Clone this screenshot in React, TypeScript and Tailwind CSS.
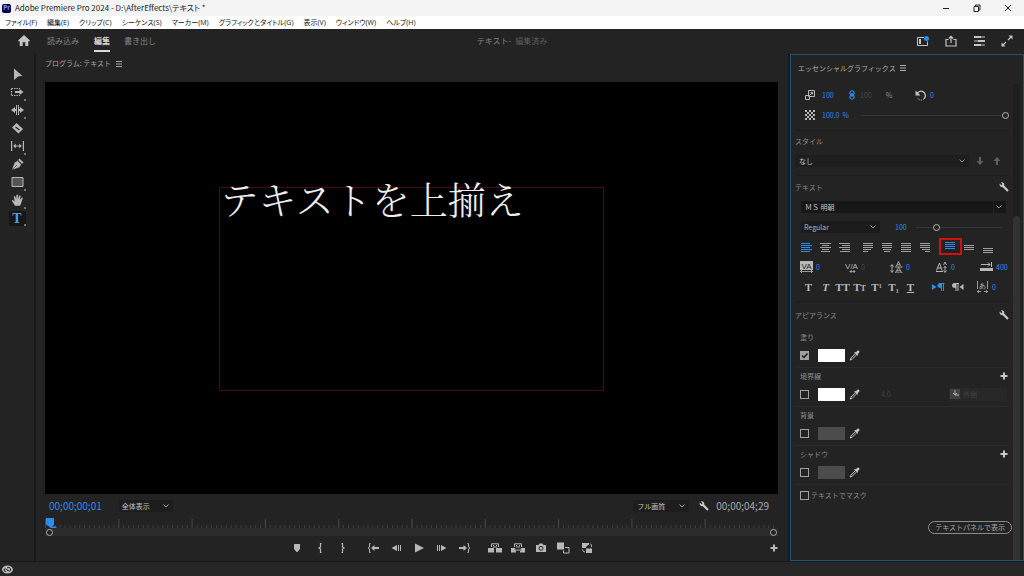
import type { ReactNode } from 'react'

type IconProps = { w?: number; h?: number; className?: string; children: ReactNode }

function Icon({ w = 12, h = 12, className = '', children }: IconProps) {
    return (
        <svg
            width={w}
            height={h}
            viewBox={`0 0 ${w} ${h}`}
            fill="currentColor"
            className={`shrink-0 ${className}`}
            aria-hidden="true"
        >
            {children}
        </svg>
    )
}

const stroke = { fill: 'none', stroke: 'currentColor' }

/* ---------- shared icons ---------- */

const MenuLines = () => (
    <Icon w={6} h={6}>
        <path d="M0 .5h6M0 3h6M0 5.5h6" {...stroke} />
    </Icon>
)

const Chevron = () => (
    <Icon w={6} h={4} className="pointer-events-none absolute top-1/2 right-1 -translate-y-1/2">
        <path d="M.5 .5L3 3L5.500 .5" {...stroke} />
    </Icon>
)

const Wrench = () => (
    <Icon w={10} h={10}>
        <path d="M.6 1.600L2.400 3.300L3.500 2.200L1.900 .5C3.500 -.1 5.300 .9 5.300 2.700L5.200 3.600L9.700 8.200L8.300 9.700L3.700 5.200C2 5.700 .1 4 .6 1.600Z" />
    </Icon>
)

const Plus = () => (
    <Icon w={8} h={8}>
        <path d="M3 .5h2V3h2.500v2H5v2.500H3V5H.5V3H3z" />
    </Icon>
)

const Eyedropper = () => (
    <Icon w={11} h={11}>
        <path d="M6 1.800L7 2.600L8 1Q9.200 .1 10.200 1Q10.900 2 10 3L8.500 4L9.200 5L8.200 5.800L5.200 2.800z" />
        <path d="M6 4L1.800 8.200L1.200 10L3 9.400L7.200 5.200" {...stroke} />
    </Icon>
)

/* ---------- top bars ---------- */

const menus = [
    'ファイル(F)',
    '編集(E)',
    'クリップ(C)',
    'シーケンス(S)',
    'マーカー(M)',
    'グラフィックとタイトル(G)',
    '表示(V)',
    'ウィンドウ(W)',
    'ヘルプ(H)',
]

function TitleBar() {
    return (
        <header className="flex h-4 items-center bg-[#f3f3f3] pl-[2px] text-[#222]">
            <span className="flex h-[9px] w-[9px] items-center justify-center rounded-xs bg-[#00005b] text-[6px] leading-none font-bold text-[#9999ff]">
                Pr
            </span>
            <h1 className="ml-1 text-[8px] leading-4 [font-feature-settings:'palt']">
                Adobe Premiere Pro 2024 - D:\AfterEffects\テキスト *
            </h1>
            <div className="ml-auto flex">
                <button aria-label="最小化" className="flex w-[31px] justify-center">
                    <Icon w={8} h={8}>
                        <path d="M1 4.500h6" {...stroke} />
                    </Icon>
                </button>
                <button aria-label="元に戻す" className="flex w-[31px] justify-center">
                    <Icon w={8} h={8}>
                        <path d="M1 2.500h4.500v5H1zM2.500 2.500V1h4.500v5H5.500" {...stroke} />
                    </Icon>
                </button>
                <button aria-label="閉じる" className="flex w-[32px] justify-center">
                    <Icon w={8} h={8}>
                        <path d="M1 1l6 6M7 1L1 7" {...stroke} />
                    </Icon>
                </button>
            </div>
        </header>
    )
}

function MenuBar() {
    return (
        <nav className="flex h-[13px] items-center gap-[10px] bg-white pl-[5px] font-['Open_Sans','Noto_Sans_CJK_JP',sans-serif] text-[7px] leading-3 text-[#111] [font-feature-settings:'palt']">
            {menus.map((m) => (
                <button key={m} className="whitespace-nowrap">
                    {m}
                </button>
            ))}
        </nav>
    )
}

function WorkspaceBar() {
    return (
        <div className="relative flex h-[25px] items-stretch bg-[#232323] pb-[2px] pl-[18px] text-[8px] text-[#858585]">
            <button aria-label="ホーム" className="mr-[17px] flex items-center text-[#c4c4c4]">
                <Icon w={12} h={11}>
                    <path d="M6 0L12 5.500L11 6.500L10.300 6V11H7.300V7.300H4.700V11H1.700V6L1 6.500L0 5.500z" />
                </Icon>
            </button>
            <button className="mr-[15px]">読み込み</button>
            <button className="mr-[14px] border-b-2 border-[#d8d8d8] pt-[2px] font-bold text-[#d8d8d8]">編集</button>
            <button>書き出し</button>
            <p className="pointer-events-none absolute inset-x-0 top-0 bottom-[2px] flex items-center justify-center text-[#858585]">
                テキスト-<span className="ml-1 text-[#5c5c5c]">編集済み</span>
            </p>
            <div className="relative ml-auto flex items-center pr-[3px] text-[#c4c4c4]">
                <button aria-label="ワークスペース" className="flex w-7 justify-center">
                    <Icon w={12} h={10}>
                        <path d="M7 1.500H.5v8h10V5.500" {...stroke} />
                        <path d="M2 3h2v5H2z" />
                        <circle cx="9.500" cy="2.500" r="2.500" fill="#2d8ceb" />
                    </Icon>
                </button>
                <button aria-label="クイック書き出し" className="flex w-7 justify-center">
                    <Icon w={12} h={12}>
                        <path d="M3.500 4.500H1v6.500h10V4.500H8.500M6 8V1.500M3.800 3.500L6 1.300L8.200 3.500" {...stroke} strokeWidth="1.200" />
                    </Icon>
                </button>
                <button aria-label="設定" className="flex w-7 justify-center">
                    <Icon w={11} h={10}>
                        <path d="M0 0h11v2H0zM0 4h11v2H0zM0 8h11v2H0z" opacity=".5" />
                        <path d="M0 0h7v2H0zM4 4h7v2H4zM0 8h7v2H0z" />
                    </Icon>
                </button>
                <button aria-label="フルスクリーン" className="flex w-7 justify-center">
                    <Icon w={12} h={12}>
                        <path d="M7 5L10.500 1.500M5 7L1.500 10.500" {...stroke} strokeWidth="1.200" />
                        <path d="M7.500 .5h4v4zM.5 7.500v4h4z" />
                    </Icon>
                </button>
            </div>
        </div>
    )
}

/* ---------- tool palette ---------- */

type Tool = { name: string; more?: boolean; icon: ReactNode }

const tools: Tool[] = [
    { name: '選択', icon: <path d="M3 .5L11.500 8L7.500 8.300L3 12z" /> },
    {
        name: 'トラックの前方選択',
        more: true,
        icon: (
            <>
                <path d="M.5 2.500H9M.5 9.500H9M.5 2.500v7" {...stroke} strokeDasharray="1.500 1" />
                <path d="M4 5h4.500V3l4 3l-4 3V7H4z" />
            </>
        ),
    },
    {
        name: 'リップル',
        more: true,
        icon: <path d="M5 1h1v10H5zM7 1h1v10H7zM0 6l4-3v2h1v2H4v2zM13 6L9 3v2H8v2h1v2z" />,
    },
    {
        name: 'レーザー',
        icon: (
            <>
                <path d="M5.500 1L12 7L7.500 11.500L1 5.500z" />
                <path d="M4.500 5L8.500 8" stroke="#232323" strokeWidth="1.200" />
            </>
        ),
    },
    {
        name: 'スリップ',
        more: true,
        icon: <path d="M0 1h1.200v10H0zM11.800 1H13v10h-1.200zM2.200 6l2.500-2.500v2h3.600v-2L10.800 6L8.300 8.500v-2H4.700v2z" />,
    },
    {
        name: 'ペン',
        icon: (
            <>
                <path d="M8.500 .5L12.500 4.500L11 5.800L7.200 2z" />
                <path d="M6.500 2.600L10.400 6.500L8.500 9.500L1.800 11.800L1 11L3.500 4.500zM2 11L6 7" stroke="#232323" strokeWidth=".5" />
            </>
        ),
    },
    {
        name: '長方形',
        more: true,
        icon: <path d="M1 1.500h11v9H1z" fill="#555" stroke="currentColor" />,
    },
    {
        name: '手のひら',
        more: true,
        icon: (
            <path d="M4 11.800L1 7Q.6 5.800 2 6.200L3.700 7.600L2.800 2.700Q3.600 1.500 4.300 2.700L5.200 5.500L5.400 1Q6.300 0 6.900 1L7 5.400L8.100 1.500Q9.200 .7 9.500 1.900L8.900 6L10.700 3.500Q12 3.300 11.700 4.500L9.800 10L9.200 11.800z" />
        ),
    },
]

function ToolBar() {
    return (
        <aside className="flex w-[34px] shrink-0 flex-col items-center bg-[#232323] pt-[11px] text-[#b8b8b8]">
            {tools.map((t) => (
                <button key={t.name} aria-label={t.name} className="relative flex h-[18px] w-[18px] items-center justify-center">
                    <Icon w={13} h={12}>
                        {t.icon}
                    </Icon>
                    {t.more && <span className="absolute right-0 bottom-0 h-[2px] w-[2px] bg-[#777]" />}
                </button>
            ))}
            <button
                aria-label="文字"
                className="relative mt-[2px] flex h-[15px] w-[17px] items-center justify-center bg-[#161616] font-['Liberation_Serif',serif] text-[14px] leading-none font-bold text-[#4a9fe8]"
            >
                T
                <span className="absolute right-0 bottom-0 h-[2px] w-[2px] bg-[#777]" />
            </button>
        </aside>
    )
}

/* ---------- program monitor ---------- */

const ticks = Array.from({ length: 150 }, (_, i) => i)

function Ruler() {
    return (
        <div className="relative h-[18px]">
            <svg className="h-[10px] w-full" aria-hidden="true">
                {ticks.map((i) => (
                    <rect
                        key={i}
                        x={`${i / 1.5}%`}
                        y={i % 15 ? 7 : 1}
                        width="1"
                        height={i % 15 ? 3 : 9}
                        fill={i % 15 ? '#404040' : '#4a4a4a'}
                    />
                ))}
            </svg>
            <div className="absolute inset-x-0 bottom-0 flex h-2 items-center justify-between bg-[#2c2c2c] px-px">
                <span className="h-[7px] w-[7px] rounded-full border border-[#b0b0b0] bg-[#232323]" />
                <span className="h-[7px] w-[7px] rounded-full border border-[#b0b0b0] bg-[#232323]" />
            </div>
            <Icon w={12} h={10} className="absolute top-0 left-px text-[#2d8ceb]">
                <path d="M0 0h8v7L6 8.500h4.500V10H5L0 6.500z" />
            </Icon>
        </div>
    )
}

type Transport = { name: string; w?: number; icon: ReactNode }

const marks: Transport[] = [
    { name: 'マーカーを追加', icon: <path d="M3 2h6v5L6.500 10h-1L3 7z" /> },
    { name: 'インをマーク', icon: <path d="M7.500 1.500H6.500V5L5 6l1.500 1v3.500h1" {...stroke} strokeWidth="1.200" /> },
    { name: 'アウトをマーク', icon: <path d="M4.500 1.500h1V5L7 6L5.500 7v3.500h-1" {...stroke} strokeWidth="1.200" /> },
]

const playback: Transport[] = [
    {
        name: 'インへ移動',
        icon: (
            <>
                <path d="M3.500 1.500h-1V5L1 6l1.500 1v3.500h1" {...stroke} />
                <path d="M4 6l3.500-3v2H12v2H7.500v2z" />
            </>
        ),
    },
    { name: '前のフレーム', icon: <path d="M1.500 6L7 3v6zM8 3h1v6H8zM10 3h1v6h-1z" /> },
    { name: '再生', icon: <path d="M2 1.500L11 6L2 10.500z" /> },
    { name: '次のフレーム', icon: <path d="M10.500 6L5 3v6zM1 3h1v6H1zM3 3h1v6H3z" /> },
    {
        name: 'アウトへ移動',
        icon: (
            <>
                <path d="M8.500 1.500h1V5L11 6L9.500 7v3.500h-1" {...stroke} />
                <path d="M8 6L4.500 3v2H0v2h4.500v2z" />
            </>
        ),
    },
]

const edits: Transport[] = [
    {
        name: 'リフト',
        w: 14,
        icon: (
            <>
                <path d="M0 6h6v4.500H0zM8 6h6v4.500H8z" />
                <path d="M3.500 5V1.800h7V5M5 5h4" {...stroke} />
                <path d="M5 3h1v1H5zM8 3h1v1H8z" />
            </>
        ),
    },
    {
        name: '抽出',
        w: 14,
        icon: (
            <>
                <path d="M0 6h4.500l-1 2l1.500 1v1.500H0zM14 6H9.500l1 2L9 9v1.500h5z" />
                <path d="M3.500 5V1.800h7V5M5 5h4M4 8h6" {...stroke} />
                <path d="M5 3h1v1H5zM8 3h1v1H8z" />
            </>
        ),
    },
    {
        name: 'フレームを書き出し',
        icon: (
            <>
                <path d="M1 3h2.500L4.500 1.500h3L8.500 3H11v7H1z" />
                <circle cx="6" cy="6.300" r="2" fill="#b8b8b8" stroke="#232323" />
            </>
        ),
    },
    {
        name: '比較表示',
        w: 13,
        icon: (
            <>
                <path d="M0 .5h7v7H0z" />
                <path d="M8 5.500h4V11H6.500V8.500" {...stroke} />
            </>
        ),
    },
    {
        name: 'プロキシの切り替え',
        icon: (
            <>
                <path d="M1 1h7v2H7L5 5v1H1zM5 6.500h6V11H5z" />
                <path d="M9 1.500Q11 2.500 10.500 5M1.500 7.500Q1.500 9.500 4 10" {...stroke} />
            </>
        ),
    },
]

function TransportGroup({ items }: { items: Transport[] }) {
    return (
        <div className="flex">
            {items.map((b) => (
                <button key={b.name} aria-label={b.name} className="flex w-[23px] justify-center">
                    <Icon w={b.w}>{b.icon}</Icon>
                </button>
            ))}
        </div>
    )
}

function ProgramMonitor() {
    return (
        <main className="flex min-w-0 flex-1 flex-col bg-[#232323] pr-[10px] pl-[9px]">
            <h2 className="flex h-[28px] items-center gap-[5px] pb-[9px] text-[7px] text-[#a8a8a8]">
                プログラム: テキスト <MenuLines />
            </h2>
            <div className="relative flex-1 bg-black">
                <div className="absolute top-[25.5%] left-[23.8%] h-[49.5%] w-[52.5%] border border-[#4a0c0c]">
                    <p className="-mt-[9px] whitespace-nowrap font-['Noto_Serif_CJK_JP','Noto_Sans_CJK_JP',serif] text-[38px] leading-[38px] font-light text-[#eee]">
                        テキストを上揃え
                    </p>
                </div>
            </div>
            <div className="mb-px flex h-[23px] items-center text-[#a8a8a8]">
                <span className="ml-1 text-[10px] text-[#2d8ceb]">00;00;00;01</span>
                <div className="relative ml-[17px] flex text-[7px]">
                    <select
                        aria-label="ズームレベル"
                        className="h-3 w-[54px] appearance-none bg-[#1d1d1d] pl-[3px] leading-3 text-[#c4c4c4]"
                    >
                        <option>全体表示</option>
                    </select>
                    <Chevron />
                </div>
                <div className="relative ml-auto flex text-[7px]">
                    <select
                        aria-label="再生時の解像度"
                        className="h-3 w-[56px] appearance-none bg-[#1d1d1d] pl-1 leading-3 text-[#c4c4c4]"
                    >
                        <option>フル画質</option>
                    </select>
                    <Chevron />
                </div>
                <button aria-label="設定" className="mr-[7px] ml-[10px] text-[#c8c8c8]">
                    <Wrench />
                </button>
                <span className="mr-[9px] text-[10px]">00;00;04;29</span>
            </div>
            <Ruler />
            <div className="flex h-[25px] items-center pb-[2px] text-[#b8b8b8]">
                <div className="flex-[4]" />
                <div className="flex gap-[7px]">
                    <TransportGroup items={marks} />
                    <TransportGroup items={playback} />
                    <TransportGroup items={edits} />
                </div>
                <div className="flex flex-[3] justify-end">
                    <button aria-label="ボタンエディター">
                        <Plus />
                    </button>
                </div>
            </div>
        </main>
    )
}

/* ---------- essential graphics ---------- */

type Rows = [number, number][]

/* rows of [start, length] */
const Lines = ({ rows, top = 1 }: { rows: Rows; top?: number }) => (
    <Icon w={11} h={11}>
        {rows.map(([x, len], i) => (
            <rect key={i} x={x} y={top + i * 2} width={len} height="1" />
        ))}
    </Icon>
)

const alignButtons: { name: string; color: string; rows: Rows }[] = [
    { name: '左揃え', color: 'text-[#2d8ceb]', rows: [[0, 9], [0, 11], [0, 9], [0, 11], [0, 9]] },
    { name: '中央揃え', color: 'text-[#a0a0a0]', rows: [[0, 11], [2, 7], [0, 11], [2, 7], [1, 9]] },
    { name: '右揃え', color: 'text-[#a0a0a0]', rows: [[0, 11], [3, 8], [0, 11], [3, 8], [1, 10]] },
]

const justifyButtons: { name: string; rows: Rows }[] = [
    { name: '均等配置(左)', rows: [[0, 10], [0, 10], [0, 10], [0, 8], [0, 5]] },
    { name: '均等配置(中央)', rows: [[0, 10], [0, 10], [0, 10], [1, 8], [2, 6]] },
    { name: '両端揃え', rows: [[0, 10], [0, 10], [0, 10], [0, 10], [0, 10]] },
    { name: '均等配置(右)', rows: [[0, 10], [0, 10], [0, 10], [2, 8], [5, 5]] },
]

const threeLines: Rows = [[0, 10], [0, 10], [0, 10]]
const fourLines: Rows = [[0, 10], [0, 10], [0, 10], [0, 10]]

function AlignRow() {
    return (
        <div className="flex h-5 items-center gap-[5px] pl-[2px] text-[#a0a0a0]">
            <div className="flex">
                {alignButtons.map((b) => (
                    <button key={b.name} aria-label={b.name} className={`flex w-[19px] justify-center ${b.color}`}>
                        <Lines rows={b.rows} />
                    </button>
                ))}
            </div>
            <div className="flex">
                {justifyButtons.map((b) => (
                    <button key={b.name} aria-label={b.name} className="flex w-[19px] justify-center">
                        <Lines rows={b.rows} />
                    </button>
                ))}
            </div>
            <div className="flex pl-px">
                <button aria-label="テキストを上揃え" className="relative flex w-[19px] justify-center text-[#2d8ceb]">
                    <Lines rows={fourLines} top={0} />
                    <span className="absolute -inset-x-0.5 -top-[4px] -bottom-[2px] border-2 border-[#d40f0f]" />
                </button>
                <button aria-label="テキストを垂直方向に中央揃え" className="flex w-[19px] justify-center">
                    <Lines rows={threeLines} top={3} />
                </button>
                <button aria-label="テキストを下揃え" className="flex w-[19px] justify-center">
                    <Lines rows={threeLines} top={6} />
                </button>
            </div>
        </div>
    )
}

const glyph = "font-['Liberation_Sans',sans-serif]"

const spacings: { name: string; value: string; dim?: boolean; icon: ReactNode }[] = [
    {
        name: 'トラッキング',
        value: '0',
        icon: (
            <>
                <rect width="13" height="9" />
                <text x="6.500" y="7.500" fontSize="8" textAnchor="middle" className={glyph} fill="#1b1b1b">VA</text>
                <path d="M0 10.500h13M2 9L.5 10.500L2 12M11 9l1.500 1.500L11 12" {...stroke} strokeWidth=".8" />
            </>
        ),
    },
    {
        name: 'カーニング',
        value: '0',
        dim: true,
        icon: (
            <>
                <text x="6.500" y="8" fontSize="8" textAnchor="middle" className={glyph}>V/A</text>
                <path d="M5 10.500h5M6.500 9L5 10.500L6.500 12M8.500 9l1.500 1.500L8.500 12" {...stroke} strokeWidth=".8" />
            </>
        ),
    },
    {
        name: '行間',
        value: '0',
        icon: (
            <>
                <path d="M6.500 5L8.500 .5L10.500 5M7.200 3.800h2.600M5.500 11.500L8.500 6.500L11.500 11.500M6.500 9.800h4M5 6h7.500M5 12h7.500" {...stroke} strokeWidth=".9" />
                <path d="M2 4v7M.5 5.500L2 3.500L3.500 5.500M.5 9.500L2 11.500L3.500 9.500" {...stroke} strokeWidth=".9" />
            </>
        ),
    },
    {
        name: 'ベースラインシフト',
        value: '0',
        icon: (
            <>
                <path d="M1.500 9.500L4.500 2L7 9.500M2.500 7h4M1 10.500h7" {...stroke} />
                <path d="M8.500 4L10 1L11.500 4M10 5v6M8.500 9.500L10 11.500L11.500 9.500M8.500 7L10 5.500L11.500 7" {...stroke} strokeWidth=".9" />
            </>
        ),
    },
    {
        name: 'タブの幅',
        value: '400',
        icon: (
            <>
                <path d="M1 3.500h9M8 1.500L10 3.500L8 5.500M11.500 1v5" {...stroke} />
                <path d="M0 7h13v3H0z" />
            </>
        ),
    },
]

const serif = "w-[17px] text-center whitespace-nowrap font-['Liberation_Serif',serif] text-[11px] leading-3 font-bold"

function FauxStyles() {
    return (
        <div className="flex h-5 items-center pl-[5px] text-[#b8b8b8]">
            <button aria-label="太字" className={serif}>T</button>
            <button aria-label="斜体" className={`${serif} italic`}>T</button>
            <button aria-label="オールキャップス" className={serif}>TT</button>
            <button aria-label="スモールキャップス" className={serif}>T<span className="text-[8px] leading-none">T</span></button>
            <button aria-label="上付き文字" className={serif}>T<sup className="text-[6px]">1</sup></button>
            <button aria-label="下付き文字" className={serif}>T<sub className="text-[6px]">1</sub></button>
            <button aria-label="下線" className={`${serif} underline`}>T</button>
            <button aria-label="左から右" className="ml-[10px] flex w-[19px] justify-center text-[#2d8ceb]">
                <Icon w={13} h={10}>
                    <path d="M0 2L4.500 5L0 8zM8 1h4.500v1H12v7h-1V2h-1v7H9V6Q5.500 6 5.500 3.500Q5.500 1 8 1z" />
                </Icon>
            </button>
            <button aria-label="右から左" className="mr-[10px] flex w-[19px] justify-center">
                <Icon w={13} h={10}>
                    <path d="M12.500 2L8.500 5l4 3zM3.500 1H8v1h-.5v7h-1V2h-1v7h-1V6Q1 6 1 3.500Q1 1 3.500 1z" />
                </Icon>
            </button>
            <Icon w={11} h={12}>
                <text x="5.500" y="7" fontSize="7" textAnchor="middle" className={glyph}>あ</text>
                <path d="M.5 0v8M10.500 0v8M0 10.500h4M7 10.500h4M2 9L.5 10.500L2 12M9 9l1.500 1.500L9 12" {...stroke} strokeWidth=".8" />
            </Icon>
            <span className="ml-[4px] text-[#2d8ceb]">0</span>
        </div>
    )
}

type SwatchProps = { label: string; checked?: boolean; color: string; add?: boolean; children?: ReactNode }

function Appearance({ label, checked, color, add, children }: SwatchProps) {
    return (
        <div className="h-[39px] border-t border-[#2b2b2b] first:border-transparent">
            <div className="flex h-4 items-center justify-between pr-px pl-[5px]">
                {label}
                {add && (
                    <button aria-label={`${label}を追加`} className="text-[#c8c8c8]">
                        <Plus />
                    </button>
                )}
            </div>
            <div className="flex h-5 items-center pr-[2px] pl-[5px]">
                <CheckBox label={label} checked={checked} />
                <button aria-label={`${label}のカラー`} className={`ml-[9px] h-[13px] w-[27px] ${color}`} />
                <button aria-label={`${label}のスポイト`} className="ml-[4px] text-[#c8c8c8]">
                    <Eyedropper />
                </button>
                {children}
            </div>
        </div>
    )
}

function CheckBox({ label, checked = false }: { label: string; checked?: boolean }) {
    return (
        <span className="relative flex text-[#1b1b1b]">
            <input
                type="checkbox"
                aria-label={label}
                defaultChecked={checked}
                className="peer h-[9px] w-[9px] appearance-none border border-[#a0a0a0] checked:bg-[#a0a0a0]"
            />
            <Icon w={9} h={9} className="pointer-events-none absolute inset-0 hidden peer-checked:block">
                <path d="M2 4.500L4 6.500L7.500 2.500" {...stroke} strokeWidth="1.500" />
            </Icon>
        </span>
    )
}

function Slider({ label, value }: { label: string; value: number }) {
    return (
        <input
            type="range"
            aria-label={label}
            defaultValue={value}
            className="h-[7px] min-w-0 flex-1 appearance-none bg-linear-to-b from-transparent from-43% via-[#4a4a4a] via-43% to-transparent to-57% [&::-webkit-slider-thumb]:h-[7px] [&::-webkit-slider-thumb]:w-[7px] [&::-webkit-slider-thumb]:appearance-none [&::-webkit-slider-thumb]:rounded-full [&::-webkit-slider-thumb]:border [&::-webkit-slider-thumb]:border-[#b8b8b8] [&::-webkit-slider-thumb]:bg-[#232323]"
        />
    )
}

function EssentialGraphics() {
    return (
        <aside className="relative flex w-[234px] shrink-0 flex-col border border-[#1f5478] bg-[#232323] pr-[14px] pl-[4px] text-[7px] text-[#8c8c8c]">
            <h2 className="mb-[4px] flex h-[26px] items-center gap-1 pl-[3px] text-[#b0b0b0]">
                エッセンシャルグラフィックス <MenuLines />
            </h2>

            <div className="flex h-5 items-center pl-[10px] text-[#2d8ceb]">
                <Icon w={10} h={10} className="text-[#b8b8b8]">
                    <path d="M.5 5.500h4v4h-4zM3.500 .5h6v6h-6zM4.500 5.500L7.500 2.500M5.500 2.500h2v2" {...stroke} />
                </Icon>
                <span className="ml-[7px] w-[27px]">100</span>
                <Icon w={6} h={10}>
                    <path d="M1 4V2Q3 -.5 5 2V4Q3 5.500 1 4M1 6V8Q3 10.500 5 8V6Q3 4.500 1 6M3 3v4" {...stroke} strokeWidth="1.200" />
                </Icon>
                <span className="ml-[5px] text-[#4a4a4a]">100</span>
                <span className="ml-[14px] text-[#8c8c8c]">%</span>
                <Icon w={12} h={11} className="ml-[23px] text-[#c4c4c4]">
                    <path d="M2 3.500Q6 -.8 9.500 3Q11.500 6 9 8.800" {...stroke} strokeWidth="1.300" />
                    <path d="M9 8.800Q5 12 2 7.500" {...stroke} strokeDasharray="1 1" />
                    <path d="M.5 .5v5h5z" />
                </Icon>
                <span className="ml-[3px]">0</span>
            </div>
            <div className="flex h-5 items-center pl-[10px] text-[#2d8ceb]">
                <Icon w={10} h={10} className="text-[#b8b8b8]">
                    <path d="M0 1h10M2 3h8M0 5h10M2 7h8M0 9h10" {...stroke} strokeDasharray="2 2" strokeWidth="2" />
                </Icon>
                <span className="mr-3 ml-[7px]">100.0&nbsp; %</span>
                <Slider label="不透明度" value={100} />
            </div>

            <section className="mt-[5px] border-t border-[#1d1d1d]">
                <h3 className="flex h-5 items-center">スタイル</h3>
                <div className="flex h-5 items-center">
                    <div className="relative flex flex-1">
                        <select
                            aria-label="スタイル"
                            className="h-3 w-full appearance-none bg-[#1e1e1e] pl-1 leading-3 text-[#c0c0c0]"
                        >
                            <option>なし</option>
                        </select>
                        <Chevron />
                    </div>
                    <button aria-label="スタイルをプッシュダウン" className="ml-[7px] text-[#606060]">
                        <Icon w={8} h={8}>
                            <path d="M3 0h2v4h2.500L4 8L.5 4H3z" />
                        </Icon>
                    </button>
                    <button aria-label="スタイルをプッシュアップ" className="mr-2 ml-[9px] text-[#606060]">
                        <Icon w={8} h={8}>
                            <path d="M3 8h2V4h2.500L4 0L.5 4H3z" />
                        </Icon>
                    </button>
                </div>
            </section>

            <section className="mt-[4px] border-t border-[#1d1d1d] pt-px">
                <div className="flex h-5 items-center justify-between">
                    <h3>テキスト</h3>
                    <button aria-label="テキストの設定" className="text-[#c8c8c8]">
                        <Wrench />
                    </button>
                </div>
                <div className="flex h-5 items-center pr-[3px] pl-[6px]">
                    <div className="relative flex flex-1">
                        <select
                            aria-label="フォント"
                            className="h-3 w-full appearance-none bg-[#171717] pl-1 leading-3 text-[#c0c0c0]"
                        >
                            <option>ＭＳ 明朝</option>
                        </select>
                        <span className="absolute inset-y-0 right-3 w-px bg-[#232323]" />
                        <Chevron />
                    </div>
                </div>
                <div className="flex h-5 items-center pr-[7px] pl-[6px]">
                    <div className="relative flex">
                        <select
                            aria-label="フォントスタイル"
                            className="h-3 w-[79px] appearance-none bg-[#1b1b1b] pl-[3px] leading-3 text-[#b0b0b0]"
                        >
                            <option>Regular</option>
                        </select>
                        <Chevron />
                    </div>
                    <span className="mr-[9px] ml-[15px] text-[#2d8ceb]">100</span>
                    <Slider label="フォントサイズ" value={22} />
                </div>
                <AlignRow />
                <div className="flex h-5 items-center pl-[5px]">
                    {spacings.map((s) => (
                        <div key={s.name} className="flex w-[45px] shrink-0 items-center gap-[3px]" title={s.name}>
                            <Icon w={13} h={12} className="text-[#b8b8b8]">
                                {s.icon}
                            </Icon>
                            <span className={s.dim ? 'text-[#484848]' : 'text-[#2d8ceb]'}>{s.value}</span>
                        </div>
                    ))}
                </div>
                <FauxStyles />
            </section>

            <section className="mt-[4px] border-t border-[#1d1d1d] pt-[3px]">
                <div className="mb-[3px] flex h-5 items-center justify-between">
                    <h3>アピアランス</h3>
                    <button aria-label="アピアランスの設定" className="text-[#c8c8c8]">
                        <Wrench />
                    </button>
                </div>
                <div>
                    <Appearance label="塗り" checked color="bg-white" />
                    <Appearance label="境界線" color="bg-white" add>
                        <span className="ml-[21px] text-[#444]">4.0</span>
                        <span className="ml-auto flex h-[13px] w-[58px] items-center gap-[3px] bg-[#282828] pl-[1px] text-[#444]">
                            <Icon w={10} h={10}>
                                <path d="M0 0h10v10H0z" opacity=".9" />
                                <path d="M5 1v5h4M5 6L3 4M5 6l2-2" stroke="#b0b0b0" fill="none" />
                            </Icon>
                            外側
                        </span>
                    </Appearance>
                    <Appearance label="背景" color="bg-[#4c4c4c]" />
                    <Appearance label="シャドウ" color="bg-[#4c4c4c]" add />
                </div>
                <label className="flex h-[22px] items-center gap-[2px] border-t border-[#2b2b2b] pl-[5px]">
                    <CheckBox label="テキストでマスク" />
                    テキストでマスク
                </label>
            </section>

            <button className="mt-[15px] -mr-[3px] flex h-[13px] items-center self-end rounded-full border border-[#8c8c8c] px-[6px] text-[#a8a8a8]">
                テキストパネルで表示
            </button>

            {/* scrollbar */}
            <div className="absolute top-[29px] right-[3px] bottom-0 w-[7px] bg-[#1e1e1e]">
                <div className="mt-[132px] h-[calc(100%-132px)] rounded-t-full bg-[#323232]" />
            </div>
        </aside>
    )
}

export default function App() {
    return (
        <div
            lang="ja"
            className="flex min-h-screen flex-col bg-[#181818] font-['Noto_Sans_CJK_JP',sans-serif] leading-none"
        >
            <TitleBar />
            <MenuBar />
            <WorkspaceBar />
            <div className="flex flex-1 gap-[2px]">
                <ToolBar />
                <ProgramMonitor />
                <EssentialGraphics />
            </div>
            <footer className="mt-px flex h-[14px] items-center bg-[#262626] pl-[2px] text-[#b8b8b8]">
                <Icon w={11} h={9}>
                    <ellipse cx="5.500" cy="4.500" rx="5.500" ry="4" />
                    <path d="M4 6.500Q1.500 6.500 2 4.500Q3 3 4.500 4.500L6 6M5 3Q7 1.500 8.500 3.500Q9.500 6 7.500 6Q6 6 5 4.500" fill="none" stroke="#262626" />
                </Icon>
            </footer>
        </div>
    )
}
